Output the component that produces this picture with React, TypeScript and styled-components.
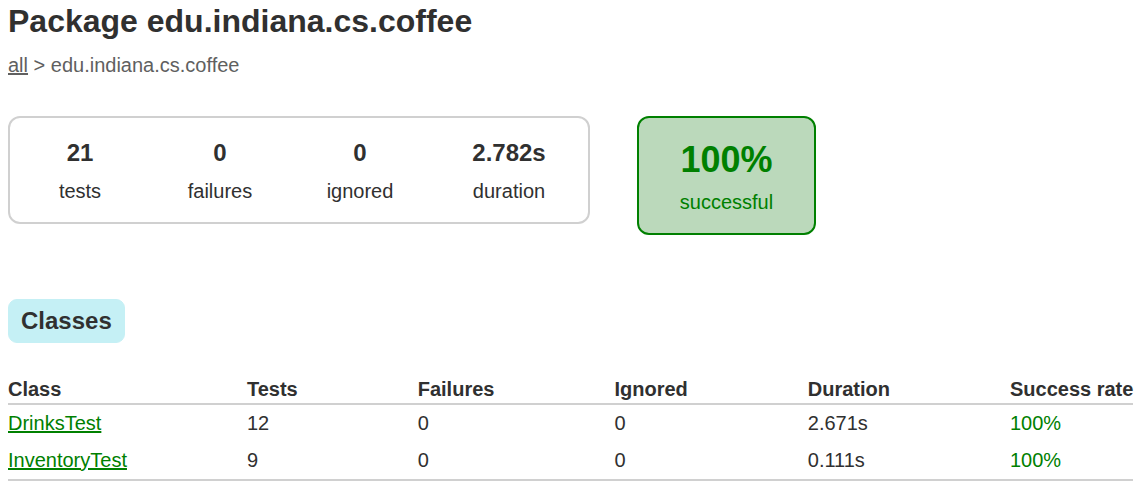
import React from "react";
import styled, { createGlobalStyle } from "styled-components";

const GlobalStyle = createGlobalStyle`
  html, body {
    margin: 0;
    padding: 0;
    background: #ffffff;
  }
  body {
    font-family: "Liberation Sans", Arial, sans-serif;
    font-size: 20px;
    color: #303030;
  }
`;

const Content = styled.div`
  padding: 3px 8px 0 8px;
`;

const Title = styled.h1`
  font-size: 32px;
  font-weight: bold;
  margin: 0 0 14px 0;
  white-space: nowrap;
`;

const Breadcrumbs = styled.div`
  color: #606060;
  a {
    color: #606060;
    text-decoration: underline;
  }
`;

const Summary = styled.div`
  display: flex;
  align-items: flex-start;
  margin-top: 39px;
  gap: 47px;
`;

const SummaryGroup = styled.div`
  display: flex;
  border: 2px solid #d0d0d0;
  border-radius: 12px;
`;

const InfoBox = styled.div<{ $w: number }>`
  width: ${(p) => p.$w}px;
  padding: 21px 0 19px 0;
  text-align: center;
  p {
    margin: 0;
  }
`;

const Counter = styled.p`
  font-size: 24px;
  font-weight: bold;
  margin-bottom: 13px !important;
`;

const SuccessBox = styled.div`
  width: 175px;
  padding: 21px 0 19px 0;
  text-align: center;
  border: 2px solid #008000;
  border-radius: 12px;
  background-color: #bbd9bb;
  color: #008000;
  p {
    margin: 0;
  }
`;

const Percent = styled.p`
  font-size: 36px;
  font-weight: bold;
  margin-bottom: 10px !important;
`;

const TabLinks = styled.ul`
  list-style: none;
  margin: 50px 0 0 0;
  padding: 14px 0 0 0;
  display: flex;
`;

const TabLink = styled.li`
  padding: 7px 12px;
  border: 1px solid #c5f0f5;
  background-color: #c5f0f5;
  border-radius: 9px;
  font-size: 24px;
  font-weight: bold;
`;

const Table = styled.table`
  border-collapse: collapse;
  margin-top: 34px;
  border-bottom: 2px solid #d0d0d0;
`;

const Th = styled.th`
  text-align: left;
  white-space: nowrap;
  padding: 1px 0 2px 120px;
  border-bottom: 2px solid #d0d0d0;
  &:first-child {
    padding-left: 0;
  }
`;

const Td = styled.td<{ $success?: boolean }>`
  white-space: nowrap;
  padding: 7px 0 7px 120px;
  color: ${(p) => (p.$success ? "#008000" : "#303030")};
  &:first-child {
    padding-left: 0;
  }
  a {
    color: #008000;
    text-decoration: underline;
  }
`;

const rows = [
  { name: "DrinksTest", tests: "12", failures: "0", ignored: "0", duration: "2.671s", rate: "100%" },
  { name: "InventoryTest", tests: "9", failures: "0", ignored: "0", duration: "0.111s", rate: "100%" },
];

export default function App() {
  return (
    <>
      <GlobalStyle />
      <Content>
        <Title>Package edu.indiana.cs.coffee</Title>
        <Breadcrumbs>
          <a href="#">all</a> &gt; edu.indiana.cs.coffee
        </Breadcrumbs>
        <Summary>
          <SummaryGroup>
            <InfoBox $w={140}>
              <Counter>21</Counter>
              <p>tests</p>
            </InfoBox>
            <InfoBox $w={140}>
              <Counter>0</Counter>
              <p>failures</p>
            </InfoBox>
            <InfoBox $w={140}>
              <Counter>0</Counter>
              <p>ignored</p>
            </InfoBox>
            <InfoBox $w={158}>
              <Counter>2.782s</Counter>
              <p>duration</p>
            </InfoBox>
          </SummaryGroup>
          <SuccessBox>
            <Percent>100%</Percent>
            <p>successful</p>
          </SuccessBox>
        </Summary>
        <TabLinks>
          <TabLink>Classes</TabLink>
        </TabLinks>
        <Table>
          <thead>
            <tr>
              <Th>Class</Th>
              <Th>Tests</Th>
              <Th>Failures</Th>
              <Th>Ignored</Th>
              <Th>Duration</Th>
              <Th>Success rate</Th>
            </tr>
          </thead>
          <tbody>
            {rows.map((r) => (
              <tr key={r.name}>
                <Td>
                  <a href="#">{r.name}</a>
                </Td>
                <Td>{r.tests}</Td>
                <Td>{r.failures}</Td>
                <Td>{r.ignored}</Td>
                <Td>{r.duration}</Td>
                <Td $success>{r.rate}</Td>
              </tr>
            ))}
          </tbody>
        </Table>
      </Content>
    </>
  );
}
